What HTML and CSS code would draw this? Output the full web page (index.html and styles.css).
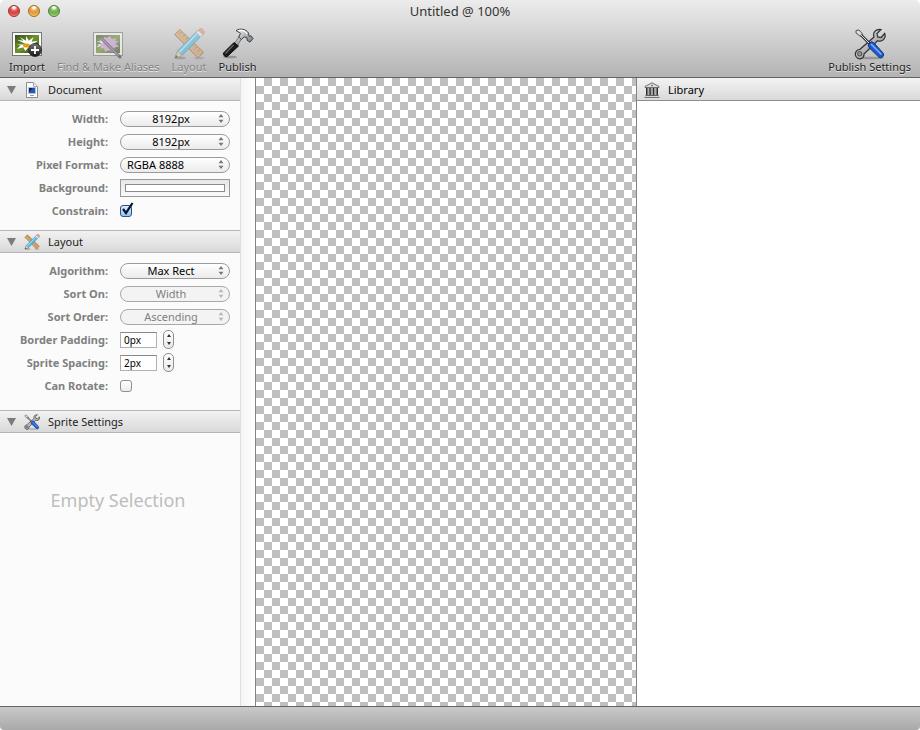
FILE: index.html
```html
<!DOCTYPE html>
<html lang="en">
<head>
<meta charset="utf-8">
<title>Untitled @ 100%</title>
<link rel="stylesheet" href="styles.css">
</head>
<body>
<svg class="defs" aria-hidden="true">
  <defs>
    <linearGradient id="leaf" x1="0" y1="0" x2="1" y2="1"><stop offset="0" stop-color="#34501a"/><stop offset=".5" stop-color="#6f942c"/><stop offset="1" stop-color="#29460e"/></linearGradient>
    <linearGradient id="steel" x1="0" y1="0" x2="1" y2="1"><stop offset="0" stop-color="#f4f4f4"/><stop offset="1" stop-color="#77797b"/></linearGradient>
    <linearGradient id="knob" x1="0" y1="0" x2="0" y2="1"><stop offset="0" stop-color="#777"/><stop offset="1" stop-color="#151515"/></linearGradient>
    <symbol id="flower" viewBox="0 0 26 18">
      <path d="M13 10 2 5l7 1-4-4 7 4 0-5 3 5 5-4-2 5 7-1-6 4 6 3-7 0 2 4-6-3-3 3-2-4-7 2 4-4-5-1z"/>
    </symbol>
    <symbol id="arrows" viewBox="0 0 6 9"><path d="M.5 3.300 3 0l2.500 3.300zM.5 5.700h5L3 9z"/></symbol>
    <symbol id="ruler-pencil" viewBox="0 0 32 32">
      <ellipse cx="7" cy="30" rx="6" ry="1.300" fill="#000" opacity=".3"/><ellipse cx="26" cy="30" rx="5" ry="1.300" fill="#000" opacity=".2"/>
      <path d="m1.500 6.500 5.300-5 23.700 22.800-5.500 5.700z" fill="#d7a16a" stroke="#9d6e3d"/>
      <path d="m9 3.500-2 2m5 1-2 2m5 1-2 2m5 1-2 2m5 1-2 2m5 1-2 2m5 1-2 2m5 1-2 2" stroke="#80552a" stroke-width=".8"/>
      <path d="m2 30 2.500-7L25 2.300l4.500 4.400L9 27.500z" fill="#4ebbe6" stroke="#2b84ac" stroke-width=".8"/>
      <path d="M6 24.500 25.500 4" stroke="#b6ecff" stroke-width="1.600"/>
      <path d="m2 30 2.500-7L9 27.500z" fill="#efd09a" stroke="#a77e48" stroke-width=".6"/><path d="m2 30 1-3 2 2z" fill="#333"/>
      <path d="m23 4.500 2.500-2.500 4.500 4.400-2.500 2.500z" fill="#e8eef2" stroke="#849aa8" stroke-width=".6"/>
      <path d="m25.500 2 1.500-1.300c1.500-1 5.300 2.500 4 4.500l-1 1.300z" fill="#ef9472" stroke="#b8684c" stroke-width=".6"/>
    </symbol>
    <symbol id="tools" viewBox="0 0 32 32">
      <ellipse cx="17" cy="30" rx="13" ry="1.300" fill="#000" opacity=".22"/>
      <path d="M2 28.500c-1.700-3 .2-7 4-7.200L20 9c-1.600-4.500 2-8.500 7-7.500l-4 4 .6 3.400 3.400.6 3.700-4c1.800 5-2.500 9-7.200 7.200L10 26c.3 5-5.500 6.500-8 2.500z" fill="url(#steel)" stroke="#333" stroke-width="1.200"/>
      <circle cx="5.700" cy="25.800" r="2.200" fill="#999" stroke="#444"/>
      <path d="M2 2.500 5 2l3.500 4-.5 2-2 0L2 5z" fill="#ddd" stroke="#333" stroke-width=".8"/>
      <path d="m7 7 10 10" stroke="#333" stroke-width="2.600"/><path d="m7 7 10 10" stroke="#ddd" stroke-width="1"/>
      <path d="m14 17 3.500-3.500 3 2L29 25c2 2.800-1.500 6-4 4.300L15.500 20z" fill="#1e5bd3" stroke="#103177" stroke-width="1"/>
      <path d="m17 16 10.500 10.500" stroke="#80b1ff" stroke-width="1.500"/>
    </symbol>
  </defs>
</svg>
<div class="window">
  <header class="toolbar">
    <div class="titlebar">
      <div class="lights">
        <button class="light red" aria-label="Close"></button>
        <button class="light amber" aria-label="Minimize"></button>
        <button class="light green" aria-label="Zoom"></button>
      </div>
      <h1 class="title">Untitled @ 100%</h1>
    </div>
    <div class="tools">
      <button class="tool">
        <svg class="tool-icon" viewBox="0 0 32 32" aria-hidden="true">
          <rect x="1.500" y="4.500" width="29" height="23" fill="#fff" stroke="#777"/>
          <rect x="4" y="7" width="24" height="18" fill="url(#leaf)"/>
          <use href="#flower" x="4" y="7" width="24" height="17" fill="#fff"/>
          <ellipse cx="15.500" cy="17.500" rx="3.500" ry="2" fill="#e79b10"/>
          <circle cx="24" cy="22" r="6.500" fill="url(#knob)" stroke="#222" stroke-width=".8"/>
          <path d="M24 18v8m-4-4h8" stroke="#fff" stroke-width="1.800"/>
        </svg>
        <span>Import</span>
      </button>
      <button class="tool" disabled>
        <svg class="tool-icon" viewBox="0 0 32 32" aria-hidden="true">
          <rect x="1.500" y="4.500" width="29" height="23" fill="#fff" stroke="#777"/>
          <rect x="4" y="7" width="24" height="18" fill="url(#leaf)"/>
          <use href="#flower" x="3" y="7" width="17" height="17" fill="#fff"/>
          <use href="#flower" x="6" y="6" width="22" height="19" fill="#dcaeea"/>
          <path d="m12 9 3 1 3-2 2 3 4 0-1 4 3 3-4 2-1 4-4-2-4 2-1-4-4-2 3-3z" fill="#cf9ddb"/>
          <path d="m9 10 19 19" stroke="#333" stroke-width="3" stroke-linecap="round"/><path d="m8.500 9.500 18 18" stroke="#ab79b4" stroke-width="1.300"/>
        </svg>
        <span>Find &amp; Make Aliases</span>
      </button>
      <button class="tool" disabled>
        <svg class="tool-icon" aria-hidden="true"><use href="#ruler-pencil"/></svg>
        <span>Layout</span>
      </button>
      <button class="tool">
        <svg class="tool-icon" viewBox="0 0 32 32" aria-hidden="true">
          <ellipse cx="8" cy="29" rx="7" ry="1.300" fill="#000" opacity=".25"/>
          <path d="m18 7-5.500 8.500 2.800 2L21 9z" fill="url(#steel)" stroke="#555" stroke-width=".7"/>
          <path d="M12 14.500 1.500 25c-.8 2 1.500 4 3.500 3.700L16.500 18z" fill="#1b1b1d" stroke="#111"/>
          <path d="m11.500 17-8 8.500" stroke="#666" stroke-width="1.200"/>
          <path d="M14 2.500C18 0 24 1 26.500 5l.7 3.500 1.800-.7 2 2.700-3 3.700-3-2 .2-2.200-3-1.200-2.700 2.700L16.800 9l1.700-3.700z" fill="url(#steel)" stroke="#3f454c"/>
          <path d="M16.500 2.700c4-1 7 .5 8.500 3.300" fill="none" stroke="#fff" stroke-width="1.200"/>
        </svg>
        <span>Publish</span>
      </button>
      <button class="tool tool-end">
        <svg class="tool-icon" aria-hidden="true"><use href="#tools"/></svg>
        <span>Publish Settings</span>
      </button>
    </div>
  </header>

  <main class="workspace">
    <aside class="sidebar">
      <section>
        <h2 class="bar">
          <svg class="triangle" viewBox="0 0 9 8" aria-hidden="true"><path d="M0 0h9L4.500 8z"/></svg>
          <svg class="bar-icon" viewBox="0 0 16 16" aria-hidden="true">
            <path d="M2.500.5h7l4 4v11h-11z" fill="#fcfcfc" stroke="#8d8d8d"/><path d="M9.500.5v4h4" fill="#eee" stroke="#aaa"/>
            <rect x="4.500" y="5.500" width="7" height="6" fill="#2458ad" stroke="#adc3e6"/><path d="M5 6h4l-4 4z" fill="#0b2452"/><path d="M6 13.500h4" stroke="#999"/>
          </svg>
          <span>Document</span>
        </h2>
        <div class="form">
          <label class="label" for="width">Width:</label>
          <div class="field popup"><select id="width"><option>8192px</option></select><svg aria-hidden="true"><use href="#arrows"/></svg></div>
          <label class="label" for="height">Height:</label>
          <div class="field popup"><select id="height"><option>8192px</option></select><svg aria-hidden="true"><use href="#arrows"/></svg></div>
          <label class="label" for="format">Pixel Format:</label>
          <div class="field popup"><select id="format" class="start"><option>RGBA 8888</option></select><svg aria-hidden="true"><use href="#arrows"/></svg></div>
          <label class="label" for="background">Background:</label>
          <div class="field"><input id="background" class="well" type="color" value="#ffffff"></div>
          <label class="label" for="constrain">Constrain:</label>
          <div class="field check"><input id="constrain" type="checkbox" checked><svg viewBox="0 0 14 14" aria-hidden="true"><path d="m3 7 3 4 6.500-10" fill="none" stroke="#07122b" stroke-width="2.200"/></svg></div>
        </div>
      </section>
      <section>
        <h2 class="bar ruled">
          <svg class="triangle" viewBox="0 0 9 8" aria-hidden="true"><path d="M0 0h9L4.500 8z"/></svg>
          <svg class="bar-icon" aria-hidden="true"><use href="#ruler-pencil"/></svg>
          <span>Layout</span>
        </h2>
        <div class="form">
          <label class="label" for="algorithm">Algorithm:</label>
          <div class="field popup"><select id="algorithm"><option>Max Rect</option></select><svg aria-hidden="true"><use href="#arrows"/></svg></div>
          <label class="label" for="sort">Sort On:</label>
          <div class="field popup"><select id="sort" disabled><option>Width</option></select><svg aria-hidden="true"><use href="#arrows"/></svg></div>
          <label class="label" for="order">Sort Order:</label>
          <div class="field popup"><select id="order" disabled><option>Ascending</option></select><svg aria-hidden="true"><use href="#arrows"/></svg></div>
          <label class="label" for="padding">Border Padding:</label>
          <div class="field"><input id="padding" class="number" type="text" value="0px">
            <div class="stepper"><button aria-label="Increase padding"><svg viewBox="0 0 4 3"><path d="M0 3 2 0l2 3z"/></svg></button><button aria-label="Decrease padding"><svg viewBox="0 0 4 3"><path d="M0 0h4L2 3z"/></svg></button></div></div>
          <label class="label" for="spacing">Sprite Spacing:</label>
          <div class="field"><input id="spacing" class="number" type="text" value="2px">
            <div class="stepper"><button aria-label="Increase spacing"><svg viewBox="0 0 4 3"><path d="M0 3 2 0l2 3z"/></svg></button><button aria-label="Decrease spacing"><svg viewBox="0 0 4 3"><path d="M0 0h4L2 3z"/></svg></button></div></div>
          <label class="label" for="rotate">Can Rotate:</label>
          <div class="field check"><input id="rotate" type="checkbox"></div>
        </div>
      </section>
      <section>
        <h2 class="bar ruled">
          <svg class="triangle" viewBox="0 0 9 8" aria-hidden="true"><path d="M0 0h9L4.500 8z"/></svg>
          <svg class="bar-icon" aria-hidden="true"><use href="#tools"/></svg>
          <span>Sprite Settings</span>
        </h2>
        <p class="empty">Empty Selection</p>
      </section>
    </aside>
    <div class="gutter"></div>
    <div class="canvas"></div>
    <aside class="library">
      <h2 class="bar library-bar">
        <svg class="bar-icon" viewBox="0 0 16 16" aria-hidden="true">
          <path d="M1 4.500 8 .8l7 3.700v1H1z" fill="#ddd" stroke="#555" stroke-width=".8"/><circle cx="8" cy="3.500" r=".8" fill="#555"/>
          <path d="M2 6h2.500v7H2zm3.300 0h2.300v7H5.300zm3.100 0h2.300v7H8.400zm3.100 0H14v7h-2.500z" fill="#777"/>
          <path d="M2.500 6v7M6 6v7M9.500 6v7M13.500 6v7" stroke="#222" stroke-width=".9"/>
          <path d="M1.500 13.500h13M.5 15.300h15" stroke="#555" stroke-width="1"/><path d="M1 14.400h14" stroke="#ddd" stroke-width=".8"/>
        </svg>
        <span>Library</span>
      </h2>
    </aside>
  </main>
  <footer class="status"></footer>
</div>
</body>
</html>
```
FILE: styles.css
```css
* { box-sizing: border-box; }
body {
  margin: 0;
  background: #fff;
  color: #1c1c1c;
  font: 11px/14px "Noto Sans", "Open Sans", sans-serif;
}
button, input, select { font: inherit; color: inherit; margin: 0; }
button { padding: 0; border: 0; background: none; }
.defs { position: absolute; width: 0; height: 0; }

.window {
  display: flex;
  flex-direction: column;
  height: 100vh;
  border-radius: 5px 5px 4px 4px;
  overflow: hidden;
}
.toolbar {
  flex: none;
  background: linear-gradient(#ececec, #d6d6d6 40%, #b3b3b3);
  border-bottom: 1px solid #646464;
}
.titlebar {
  display: grid;
  grid-template-columns: 1fr auto 1fr;
  align-items: center;
  height: 22px;
  padding: 0 8px;
}
.lights { display: flex; gap: 8px; }
.light {
  width: 12px;
  height: 12px;
  border: 1px solid;
  border-radius: 50%;
}
.red { background: radial-gradient(circle at 50% 15%, #fff 8%, #e45551 35%, #d93e3c 60%, #ffaca4); border-color: #93312f; }
.amber { background: radial-gradient(circle at 50% 15%, #fff 8%, #eaa440 35%, #e79a35 60%, #ffe38b); border-color: #9c6a2b; }
.green { background: radial-gradient(circle at 50% 15%, #fff 8%, #7dba56 35%, #6eae49 60%, #c9f4a0); border-color: #4c7a38; }
.title { margin: 0; font-size: 13px; line-height: 16px; font-weight: 400; color: #333; }

.tools { display: flex; gap: 12px; padding: 6px 9px 3px; }
.tool {
  display: flex;
  flex-direction: column;
  align-items: center;
  font-size: 11px;
  line-height: 14px;
  text-shadow: 0 1px 0 #e6e6e6;
}
.tool-icon { width: 32px; height: 32px; }
.tool:disabled { color: #828282; }
.tool:disabled .tool-icon { opacity: .55; }
.tool-end { margin-left: auto; }

.workspace {
  flex: 1;
  min-height: 0;
  display: grid;
  grid-template-columns: 240px 16px 1fr 284px;
}
.sidebar { background: #fbfbfb; overflow: hidden; }
.gutter {
  background: linear-gradient(to right, #f4f4f4, #fff);
  border-left: 1px solid #dedede;
  border-right: 1px solid #848484;
}
.canvas { background: repeating-conic-gradient(#bfbfbf 0 25%, #fff 0 50%) 0 0 / 16px 16px; }
.library { background: #fff; border-left: 1px solid #848484; }

.bar {
  display: flex;
  align-items: center;
  gap: 8px;
  height: 23px;
  margin: 0;
  padding: 0 8px 0 7px;
  background: linear-gradient(#f2f2f2, #d9d9d9);
  border-top: 1px solid #f4f4f4;
  border-bottom: 1px solid #b5b5b5;
  font-size: 11px;
  line-height: 14px;
  font-weight: 400;
}
.ruled { border-top-color: #b5b5b5; }
.triangle { width: 9px; height: 8px; fill: #7c7c7c; }
.bar-icon { width: 16px; height: 16px; }
.library-bar { color: #000; border-bottom-color: #8e8e8e; }

.form {
  display: grid;
  grid-template-columns: 108px 1fr;
  grid-auto-rows: 23px;
  column-gap: 12px;
  align-items: center;
  padding: 6px 10px 8px 0;
}
.ruled + .form { padding-bottom: 13px; }
.label { text-align: right; font-weight: 700; color: #808080; }
.field { position: relative; display: flex; align-items: center; gap: 6px; }

.popup select {
  appearance: none;
  width: 100%;
  height: 16px;
  padding: 0 14px 0 6px;
  border: 1px solid #9b9b9b;
  border-radius: 8px;
  background: linear-gradient(#fff, #ebebeb);
  color: #000;
  line-height: 14px;
  text-align: center;
  text-align-last: center;
}
.popup select.start { text-align-last: left; }
.popup select:disabled { color: #808080; background: #f3f3f3; border-color: #a8a8a8; opacity: 1; }
.popup svg {
  position: absolute;
  right: 6px;
  width: 6px;
  height: 9px;
  fill: #777;
  pointer-events: none;
}
.popup select:disabled + svg { fill: #b8b8b8; }

.well {
  width: 100%;
  height: 18px;
  padding: 4px;
  border: 1px solid #999;
  background: linear-gradient(#e6e6e6, #fafafa);
}
.well::-webkit-color-swatch-wrapper { padding: 0; }
.well::-webkit-color-swatch { border: 1px solid #8c8c8c; border-radius: 0; }

.check input {
  appearance: none;
  width: 12px;
  height: 12px;
  border: 1px solid #8f8f8f;
  border-radius: 3px;
  background: linear-gradient(#fff, #ececec);
}
.check input:checked { border-color: #3b4d86; background: linear-gradient(#dcebfb, #8fc4f3); }
.check svg { position: absolute; left: 0; bottom: 1px; width: 14px; height: 14px; pointer-events: none; }

.number {
  width: 37px;
  height: 16px;
  padding: 0 3px;
  border: 1px solid #b0b0b0;
  border-top-color: #888;
  background: #fff;
  color: #000;
  font-size: 10px;
}
.stepper {
  display: flex;
  flex-direction: column;
  width: 11px;
  height: 19px;
  border: 1px solid #8f8f8f;
  border-radius: 5px;
  background: linear-gradient(#fff, #e9e9e9);
}
.stepper button { flex: 1; display: flex; align-items: center; justify-content: center; }
.stepper svg { width: 4px; height: 3px; fill: #333; }

.empty {
  margin: 0;
  padding: 55px 4px 55px 0;
  text-align: center;
  font-size: 18px;
  line-height: 24px;
  color: #bdbdbd;
}
.status {
  flex: none;
  height: 24px;
  border-top: 1px solid #646464;
  background: linear-gradient(#c9c9c9, #a9a9a9);
}
```
